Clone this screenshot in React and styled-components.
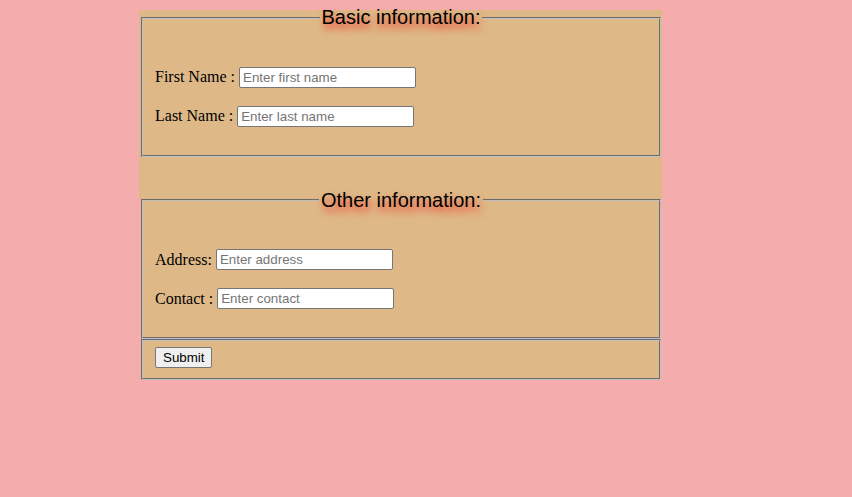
import styled, { createGlobalStyle } from "styled-components";

const GlobalStyle = createGlobalStyle`
  body {
    margin: 0;
    background: #f5acac;
    font-family: "Liberation Serif", "Times New Roman", serif;
    font-size: 16px;
    color: #000;
  }
`;

const Form = styled.form`
  width: 523px;
  margin: 10px 0 0 139px;
`;

const Basic = styled.div`
  display: flow-root;
  background: burlywood;
  padding-bottom: 42px;
`;

const Fieldset = styled.fieldset`
  box-sizing: border-box;
  width: 520px;
  margin: ${(p) => p.$top || 0}px 0 0 2px;
  padding: 5.6px 12px ${(p) => p.$bottom ?? 10}px;
  border: 2px groove #c0c0c0;
  background: burlywood;
`;

const Legend = styled.legend`
  margin: 0 auto;
  padding: 0 2px;
  font-family: "Liberation Sans", Arial, sans-serif;
  font-size: 20px;
  text-shadow: 2px 5px 7px #f03a2a;
`;

const Fields = styled.div`
  display: flex;
  flex-direction: column;
  gap: 18px;
  padding: 32px 0 18px;
`;

const Row = styled.div`
  display: flex;
  align-items: center;
  gap: 4px;
  height: 21px;
`;

const Label = styled.label`
  font-size: 16px;
  white-space: nowrap;
`;

const Input = styled.input`
  box-sizing: border-box;
  width: 177px;
  height: 21px;
  padding: 1px 3px;
  border: 1px solid #767676;
  border-radius: 2px;
  background: #fff;
  font: 13.333px "Liberation Sans", Arial, sans-serif;
  &::placeholder {
    color: #757575;
  }
`;

const Button = styled.button`
  box-sizing: border-box;
  height: 21px;
  padding: 1px 7px;
  border: 1px solid #767676;
  border-radius: 2px;
  background: #efefef;
  color: #000;
  font: 13.333px "Liberation Sans", Arial, sans-serif;
`;

const Field = ({ label, placeholder }) => (
  <Row>
    <Label>{label}</Label>
    <Input placeholder={placeholder} />
  </Row>
);

export default function App() {
  return (
    <>
      <GlobalStyle />
      <Form onSubmit={(e) => e.preventDefault()}>
        <Basic>
          <Fieldset $top={-4}>
            <Legend>Basic information:</Legend>
            <Fields>
              <Field label="First Name :" placeholder="Enter first name" />
              <Field label="Last Name :" placeholder="Enter last name" />
            </Fields>
          </Fieldset>
        </Basic>
        <Fieldset $top={-10}>
          <Legend>Other information:</Legend>
          <Fields>
            <Field label="Address:" placeholder="Enter address" />
            <Field label="Contact :" placeholder="Enter contact" />
          </Fields>
        </Fieldset>
        <Fieldset $bottom={10}>
          <Button type="submit">Submit</Button>
        </Fieldset>
      </Form>
    </>
  );
}
